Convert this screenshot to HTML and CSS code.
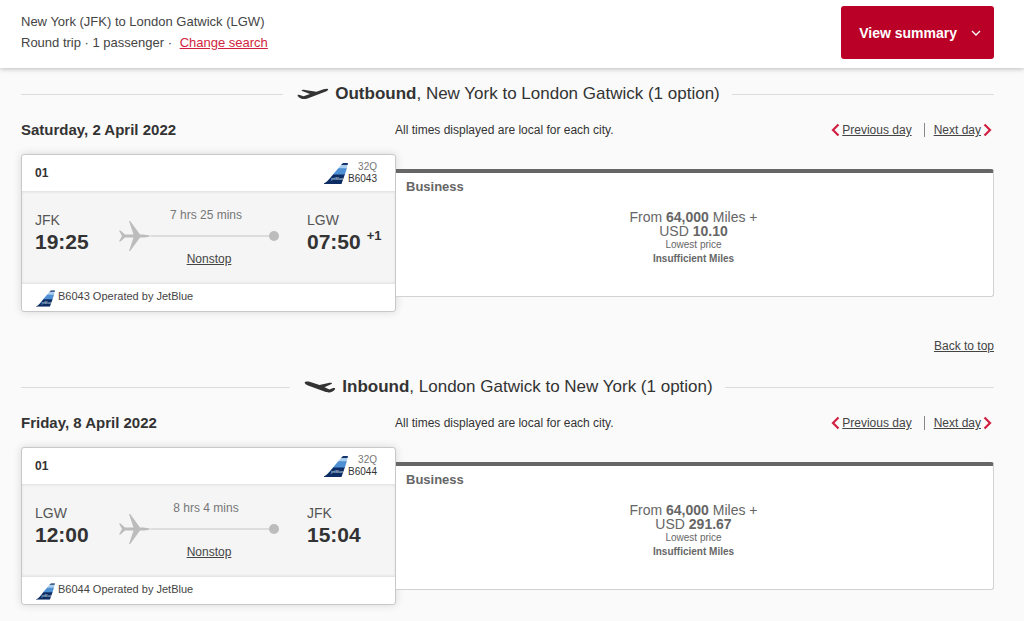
FILE: index.html
```html
<!DOCTYPE html>
<html lang="en">
<head>
<meta charset="utf-8">
<meta name="viewport" content="width=device-width, initial-scale=1">
<title>New York (JFK) to London Gatwick (LGW)</title>
<link rel="stylesheet" href="styles.css">
</head>
<body>
<svg class="sprite" aria-hidden="true">
  <symbol id="tail" viewBox="0 0 24 21">
    <path fill="#0d2c63" d="M0 21V20.300C3 19.500 6 15 9.500 11H21L17.500 21z"/>
    <path fill="#4f8fd3" d="M9 11.500 14.500 5H22.900L20.900 11.500z"/>
    <path fill="#a9cdec" d="M14.200 5.300 17.200 1.800H23.600L22.800 5.300z"/>
    <path fill="#15326a" d="M17 2 19 0H24L23.500 2z"/>
  </symbol>
  <symbol id="plane" viewBox="0 0 32 30">
    <path fill="#bcbcbc" d="M0 9.500H1.500L6 13.500H14.500L10 0H11.200L21 13.500C26 13.500 29 14 32 15C29 16 26 16.500 21 16.500L11.200 30H10L14.500 16.500H6L1.500 20.500H0L3 15z"/>
  </symbol>
  <symbol id="takeoff" viewBox="0 0 32 12">
    <path fill="#333" d="M0.500 7.200C1 6.500 2.500 6.600 3.500 7.200L6.500 8.200 13 6 4.500 2.800C5 1.700 6.500 1.500 8 1.900L19.500 3.800 26.500 1.200C28.500 .5 31 .4 31.200 1.200 31.400 2.200 29.500 3.300 27.500 4.100L10.500 10.400C7.500 11.500 5.500 11.200 3.500 10.200 2 9.500 1 8.500 .5 7.200z"/>
  </symbol>
  <symbol id="landing" viewBox="0 0 32 12">
    <path fill="#333" d="M.7 1.200C1.300.3 3.500.2 5.500.8L15.500 4 25.500 1.800C27 1.600 28 1.900 28 2.800L20.500 6.300 25.500 8.500 28.500 7.300C30 6.900 31.200 7 31.200 7.900 30.500 9.500 28.500 10.600 26.500 11.200 24.500 11.700 23 11.300 20.500 10.500L4 4.500C2 3.700.3 2.300.7 1.200z"/>
  </symbol>
  <symbol id="chevron" viewBox="0 0 9 14">
    <path fill="none" stroke="#d11f41" stroke-width="2.200" d="M1.500 1.500 7 7 1.500 12.500"/>
  </symbol>
</svg>

<header class="topbar" id="top">
  <div class="trip">
    <p class="trip-line">New York (JFK) to London Gatwick (LGW)</p>
    <p class="trip-line">Round trip · 1 passenger · <a class="change" href="#search">Change search</a></p>
  </div>
  <button class="summary" type="button">View summary
    <svg class="summary-arrow" viewBox="0 0 10 6" aria-hidden="true"><path fill="none" stroke="#fff" stroke-width="1.300" d="M1 1 5 5 9 1"/></svg>
  </button>
</header>

<main class="results">
  <section class="leg">
    <h2 class="leg-title"><svg class="leg-icon" aria-hidden="true"><use href="#takeoff"/></svg><span><strong>Outbound</strong>, New York to London Gatwick (1 option)</span></h2>
    <div class="leg-bar">
      <h3 class="date">Saturday, 2 April 2022</h3>
      <div class="leg-bar-rest">
        <p class="note">All times displayed are local for each city.</p>
        <nav class="days" aria-label="Change outbound day">
          <a class="day" href="#previous-out"><svg class="chevron chevron-left" aria-hidden="true"><use href="#chevron"/></svg><span class="day-text">Previous day</span></a>
          <a class="day day-next" href="#next-out"><span class="day-text">Next day</span><svg class="chevron" aria-hidden="true"><use href="#chevron"/></svg></a>
        </nav>
      </div>
    </div>
    <div class="option">
      <article class="flight">
        <div class="flight-head">
          <strong>01</strong>
          <div class="aircraft"><svg class="tail" viewBox="0 0 24 21" aria-hidden="true"><use href="#tail"/><text class="tail-name" x="7" y="17">jetBlue</text></svg><p class="codes"><span class="model">32Q</span><br>B6043</p></div>
        </div>
        <div class="flight-body">
          <div class="stop"><p class="airport">JFK</p><p class="time">19:25</p></div>
          <div class="path">
            <p class="duration">7 hrs 25 mins</p>
            <div class="track"><svg class="plane" aria-hidden="true"><use href="#plane"/></svg><span class="line"></span><span class="dot"></span></div>
            <a class="nonstop" href="#details-out">Nonstop</a>
          </div>
          <div class="stop"><p class="airport">LGW</p><p class="time">07:50<sup class="plus">+1</sup></p></div>
        </div>
        <div class="flight-foot"><svg class="tail tail-small" viewBox="0 0 24 21" aria-hidden="true"><use href="#tail"/><text class="tail-name" x="7" y="17">jetBlue</text></svg><p>B6043 Operated by JetBlue</p></div>
      </article>
      <div class="fare">
        <h4 class="cabin">Business</h4>
        <div class="price">
          <p class="amount">From <strong>64,000</strong> Miles +<br>USD <strong>10.10</strong></p>
          <p class="lowest">Lowest price</p>
          <p class="insufficient">Insufficient Miles</p>
        </div>
      </div>
    </div>
    <a class="back" href="#top">Back to top</a>
  </section>

  <section class="leg">
    <h2 class="leg-title"><svg class="leg-icon" aria-hidden="true"><use href="#landing"/></svg><span><strong>Inbound</strong>, London Gatwick to New York (1 option)</span></h2>
    <div class="leg-bar">
      <h3 class="date">Friday, 8 April 2022</h3>
      <div class="leg-bar-rest">
        <p class="note">All times displayed are local for each city.</p>
        <nav class="days" aria-label="Change inbound day">
          <a class="day" href="#previous-in"><svg class="chevron chevron-left" aria-hidden="true"><use href="#chevron"/></svg><span class="day-text">Previous day</span></a>
          <a class="day day-next" href="#next-in"><span class="day-text">Next day</span><svg class="chevron" aria-hidden="true"><use href="#chevron"/></svg></a>
        </nav>
      </div>
    </div>
    <div class="option">
      <article class="flight">
        <div class="flight-head">
          <strong>01</strong>
          <div class="aircraft"><svg class="tail" viewBox="0 0 24 21" aria-hidden="true"><use href="#tail"/><text class="tail-name" x="7" y="17">jetBlue</text></svg><p class="codes"><span class="model">32Q</span><br>B6044</p></div>
        </div>
        <div class="flight-body">
          <div class="stop"><p class="airport">LGW</p><p class="time">12:00</p></div>
          <div class="path">
            <p class="duration">8 hrs 4 mins</p>
            <div class="track"><svg class="plane" aria-hidden="true"><use href="#plane"/></svg><span class="line"></span><span class="dot"></span></div>
            <a class="nonstop" href="#details-in">Nonstop</a>
          </div>
          <div class="stop"><p class="airport">JFK</p><p class="time">15:04</p></div>
        </div>
        <div class="flight-foot"><svg class="tail tail-small" viewBox="0 0 24 21" aria-hidden="true"><use href="#tail"/><text class="tail-name" x="7" y="17">jetBlue</text></svg><p>B6044 Operated by JetBlue</p></div>
      </article>
      <div class="fare">
        <h4 class="cabin">Business</h4>
        <div class="price">
          <p class="amount">From <strong>64,000</strong> Miles +<br>USD <strong>291.67</strong></p>
          <p class="lowest">Lowest price</p>
          <p class="insufficient">Insufficient Miles</p>
        </div>
      </div>
    </div>
  </section>
</main>
</body>
</html>
```

FILE: styles.css
```css
* {
  box-sizing: border-box;
}

body {
  margin: 0;
  background: #fafafa;
  color: #333;
  font-family: "Liberation Sans", Arial, sans-serif;
  font-size: 12px;
  line-height: 16px;
}

p, h2, h3, h4 {
  margin: 0;
}

.sprite {
  position: absolute;
  width: 0;
  height: 0;
}

.topbar {
  display: flex;
  justify-content: space-between;
  align-items: flex-start;
  padding: 6px 30px 9px 21px;
  background: #fff;
  box-shadow: 0 1px 5px rgba(0, 0, 0, 0.25);
}

.trip {
  padding-top: 5px;
}

.trip-line {
  font-size: 13px;
  line-height: 21px;
  color: #444;
}

.change {
  margin-left: 4px;
  color: #d11f41;
}

.summary {
  display: flex;
  align-items: center;
  gap: 14px;
  height: 53px;
  padding: 0 13px 0 18px;
  border: 0;
  border-radius: 3px;
  background: #ba0027;
  color: #fff;
  font-family: inherit;
  font-size: 14px;
  font-weight: bold;
}

.summary-arrow {
  width: 10px;
  height: 6px;
}

.results {
  padding: 14px 30px 16px 21px;
}

.leg {
  display: flex;
  flex-direction: column;
}

.leg-title {
  display: flex;
  align-items: center;
  font-size: 17px;
  line-height: 24px;
  font-weight: normal;
}

.leg-title::before,
.leg-title::after {
  content: "";
  flex: 1;
  height: 1px;
  background: #ddd;
}

.leg-title::before {
  margin-right: 14px;
}

.leg-title::after {
  margin-left: 12px;
}

.leg-icon {
  width: 32px;
  height: 12px;
  margin-right: 6px;
}

.leg-bar {
  display: grid;
  grid-template-columns: 374fr 599fr;
  align-items: center;
  margin-top: 14px;
  line-height: 20px;
}

.date {
  font-size: 15px;
}

.leg-bar-rest {
  display: flex;
  justify-content: space-between;
}

.note {
  font-size: 12px;
}

.days {
  display: flex;
  align-items: center;
  padding-right: 2px;
}

.day {
  display: flex;
  align-items: center;
  gap: 2px;
  color: #444;
  font-size: 12px;
  line-height: 14px;
  text-decoration: none;
}

.day-text {
  text-decoration: underline;
}

.day-next {
  margin-left: 12px;
  padding-left: 9px;
  border-left: 1px solid #888;
}

.chevron {
  width: 9px;
  height: 14px;
}

.chevron-left {
  transform: scaleX(-1);
}

.option {
  display: grid;
  grid-template-columns: 375fr 598fr;
  align-items: start;
  margin-top: 14px;
}

.flight {
  border: 1px solid #c8c8c8;
  border-radius: 3px;
  background: #fff;
  box-shadow: 0 0 8px rgba(0, 0, 0, 0.14);
}

.flight-head {
  display: flex;
  justify-content: space-between;
  align-items: center;
  height: 36px;
  padding: 0 18px 0 13px;
}

.aircraft {
  display: flex;
  align-items: center;
}

.tail {
  width: 24px;
  height: 21px;
}

.tail-name {
  fill: #dfe8f5;
  font-size: 4px;
}

.codes {
  font-size: 10px;
  line-height: 12px;
  text-align: right;
}

.model {
  color: #777;
}

.flight-body {
  display: grid;
  grid-template-columns: 84fr 160fr 28fr 88fr;
  height: 93px;
  padding-left: 13px;
  background: #f5f5f5;
  box-shadow: inset 0 2px 3px -1px #ddd, inset 0 -2px 3px -1px #ddd;
}

.stop {
  padding-top: 19px;
}

.stop:last-child {
  grid-column: 4;
}

.airport {
  font-size: 14px;
  line-height: 20px;
  color: #555;
}

.time {
  font-size: 21px;
  line-height: 24px;
  font-weight: bold;
}

.plus {
  margin-left: 6px;
  font-size: 13px;
  line-height: 1px;
  vertical-align: 9px;
}

.path {
  display: flex;
  flex-direction: column;
  align-items: center;
  padding-top: 16px;
}

.duration {
  margin-right: -14px;
  color: #777;
}

.track {
  display: flex;
  align-items: center;
  align-self: stretch;
  height: 26px;
}

.plane {
  width: 32px;
  height: 30px;
  flex: none;
}

.line {
  flex: 1;
  height: 2px;
  background: #ddd;
}

.dot {
  width: 10px;
  height: 10px;
  border-radius: 50%;
  background: #bcbcbc;
}

.nonstop {
  margin: 2px 0 0 20px;
  color: #444;
}

.flight-foot {
  display: flex;
  gap: 3px;
  height: 27px;
  padding: 4px 14px 0;
  font-size: 11px;
  color: #444;
}

.tail-small {
  width: 19px;
  height: 17px;
  margin-top: 2px;
}

.fare {
  min-height: 128px;
  margin-top: 15px;
  padding: 6px 0 0 10px;
  border: 1px solid #d2d2d2;
  border-top: 4px solid #666;
  border-left: 0;
  border-radius: 0 3px 3px 0;
  background: #fff;
  color: #666;
}

.cabin {
  font-size: 13px;
  line-height: 16px;
}

.price {
  margin-top: 15px;
  padding-right: 12px;
  text-align: center;
}

.amount {
  font-size: 14px;
  line-height: 14px;
}

.lowest {
  font-size: 10px;
  line-height: 14px;
}

.insufficient {
  font-size: 10px;
  line-height: 14px;
  font-weight: bold;
}

.back {
  align-self: flex-end;
  margin: 26px 0 21px;
  color: #444;
}
```
